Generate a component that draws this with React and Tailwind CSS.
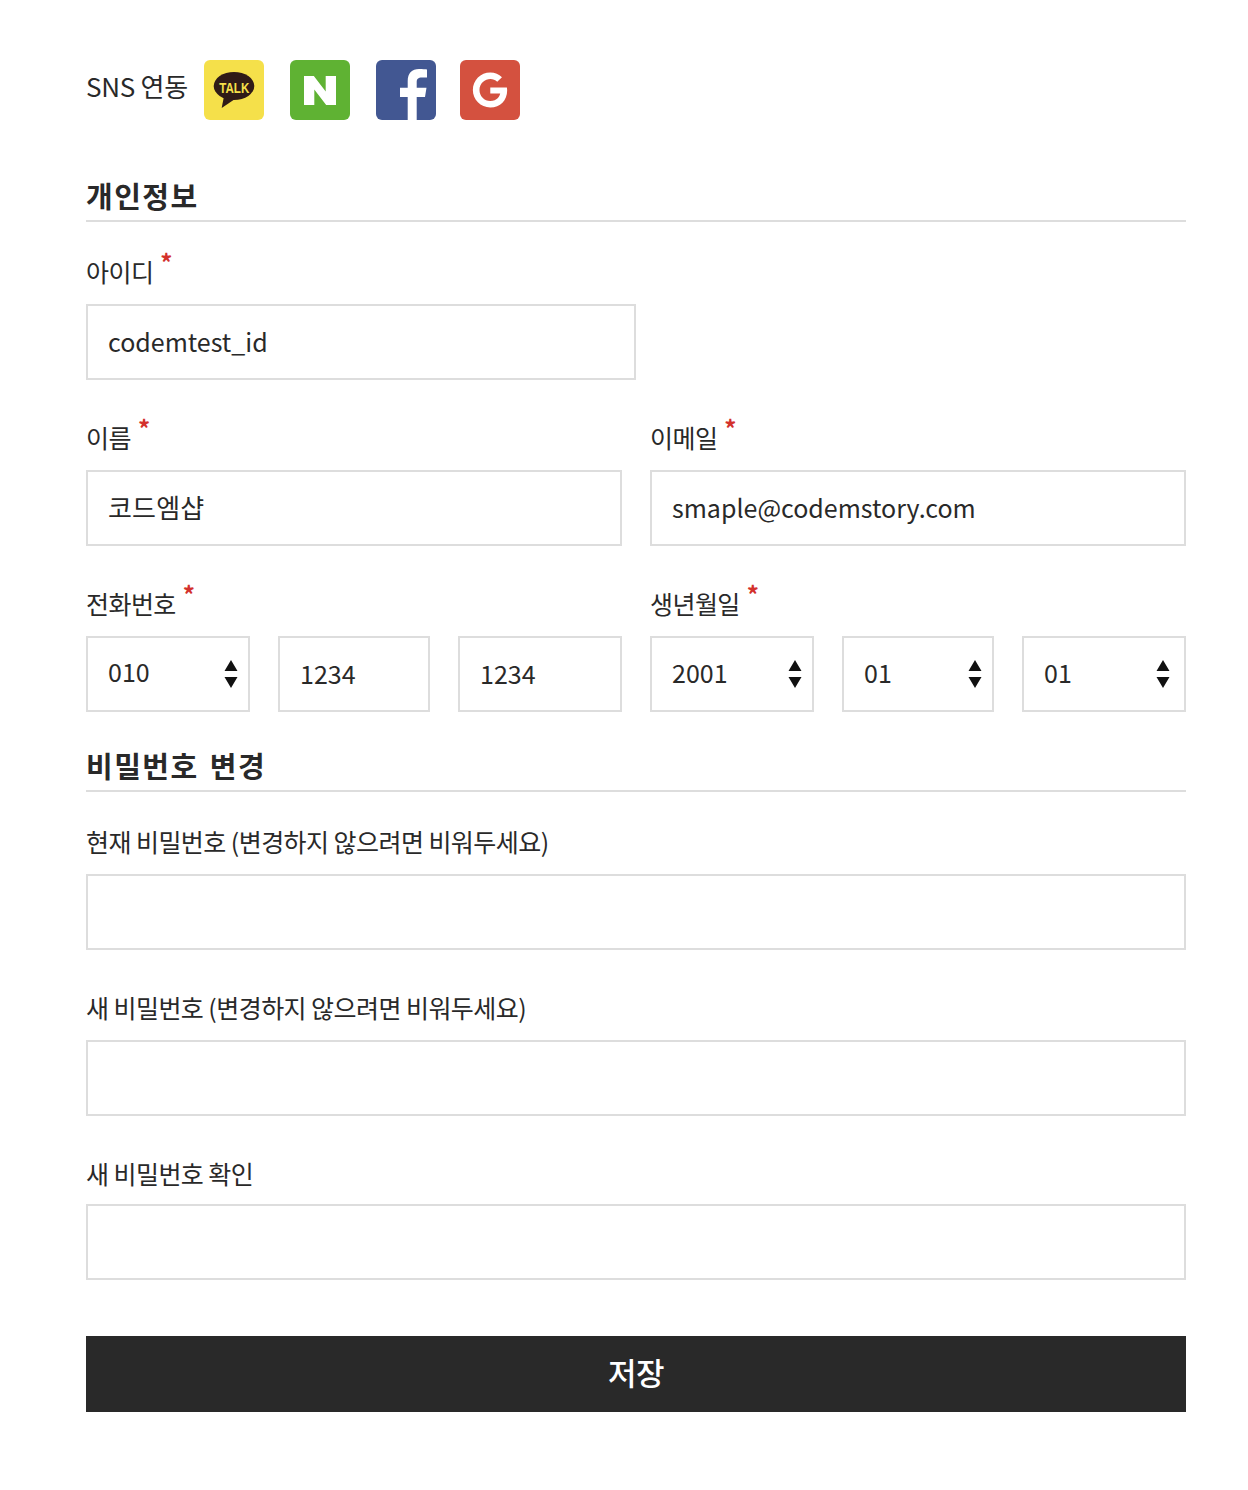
import { SiNaver } from "react-icons/si";
import { FaGoogle } from "react-icons/fa";

const inputClass =
  "h-[76px] w-full border-2 border-[#dddddd] bg-white px-5 text-[25px] text-[#292929] outline-none rounded-none";

function Label({ children, required, short }) {
  return (
    <div
      className={`flex items-start pt-[14px] text-[25px] leading-[38px] tracking-[-0.55px] text-[#292929] ${
        short ? "h-[64px]" : "h-[66px]"
      }`}
    >
      <span>{children}</span>
      {required ? (
        <span className="relative ml-[7px] -top-[3px] text-[24px] leading-[26px] font-bold text-[#d3312c]">*</span>
      ) : null}
    </div>
  );
}

function TextInput({ value = "", type = "text", className = "pb-[2px]" }) {
  return <input type={type} value={value} readOnly className={`${inputClass} ${className}`} />;
}

function Select({ value, className = "pb-[2px]", arrowClass = "right-[12px]" }) {
  return (
    <div className="relative">
      <select value={value} onChange={() => {}} className={`${inputClass} appearance-none ${className}`}>
        <option value={value}>{value}</option>
      </select>
      <svg className={`pointer-events-none absolute top-[24px] ${arrowClass}`} width="14" height="28" viewBox="0 0 14 28">
        <path d="M7 0 L13.5 11 H0.5 Z M0.5 17 H13.5 L7 28 Z" fill="#111111" />
      </svg>
    </div>
  );
}

function Heading({ children }) {
  return (
    <h2 className="flex h-[56px] items-end border-b-2 border-[#dddddd] pb-[4px] text-[29px] leading-[42px] font-bold tracking-[1.5px] [word-spacing:3px] text-[#292929]">
      {children}
    </h2>
  );
}

function KakaoIcon() {
  return (
    <div className="flex size-[60px] items-center justify-center rounded-[6px] bg-[#f5e04a]">
      <svg width="60" height="60" viewBox="0 0 60 60">
        <ellipse cx="30" cy="26" rx="20.3" ry="14" fill="#2f1b17" />
        <path d="M20 36 L17.7 48 L31 39 Z" fill="#2f1b17" />
        <text
          x="15.3"
          y="33"
          fontSize="14.5"
          fontWeight="700"
          textLength="30"
          lengthAdjust="spacingAndGlyphs"
          fill="#f5e04a"
          fontFamily="'Liberation Sans', sans-serif"
        >
          TALK
        </text>
      </svg>
    </div>
  );
}

function FacebookIcon() {
  return (
    <div className="size-[60px] overflow-hidden rounded-[6px] bg-[#425792]">
      <svg width="60" height="60" viewBox="0 0 60 60">
        <path
          d="M31.7 60 V37 H24 V27.7 H31.7 V21 C31.7 13 36 9 43 9 C46 9 50 9.3 51 9.5 V17.5 H46 C42 17.5 40.7 19 40.7 22 V27.7 H50.5 L49 37 H40.7 V60 Z"
          fill="#ffffff"
        />
      </svg>
    </div>
  );
}

export default function App() {
  return (
    <div className="min-h-[1490px] bg-white pt-[60px] pl-[86px] pr-[62px] font-['Noto_Sans_CJK_KR','Noto_Sans',sans-serif]">
      <div className="flex h-[60px] items-start">
        <span className="w-[118px] pt-[6px] text-[26px] leading-[40px] tracking-[-0.25px] text-[#292929]">SNS 연동</span>
        <KakaoIcon />
        <div className="ml-[26px] flex size-[60px] items-center justify-center rounded-[6px] bg-[#5fb233] text-white">
          <SiNaver className="h-[29px] w-[32px]" preserveAspectRatio="none" />
        </div>
        <div className="ml-[26px]">
          <FacebookIcon />
        </div>
        <div className="ml-[24px] flex size-[60px] items-center justify-center rounded-[6px] bg-[#d4513f] text-white">
          <FaGoogle size={36} />
        </div>
      </div>

      <div className="mt-[46px]">
        <Heading>개인정보</Heading>
      </div>

      <div className="pt-4">
        <div className="mb-6 w-[550px]">
          <Label required>아이디</Label>
          <TextInput value="codemtest_id" />
        </div>

        <div className="mb-6 grid grid-cols-2 gap-x-7">
          <div>
            <Label required>이름</Label>
            <TextInput value="코드엠샵" className="pb-1 text-[26px] tracking-[0.2px]" />
          </div>
          <div>
            <Label required>이메일</Label>
            <TextInput value="smaple@codemstory.com" />
          </div>
        </div>

        <div className="mb-6 grid grid-cols-2 gap-x-7">
          <div>
            <Label required>전화번호</Label>
            <div className="grid grid-cols-[164px_1fr_164px] gap-x-7">
              <Select value="010" className="pb-[5px]" />
              <TextInput value="1234" />
              <TextInput value="1234" />
            </div>
          </div>
          <div>
            <Label required>생년월일</Label>
            <div className="grid grid-cols-[164px_1fr_164px] gap-x-7">
              <Select value="2001" />
              <Select value="01" />
              <Select value="01" arrowClass="right-[16px]" />
            </div>
          </div>
        </div>
      </div>

      <Heading>비밀번호 변경</Heading>

      <div className="pt-4">
        <div className="mb-6">
          <Label>현재 비밀번호 (변경하지 않으려면 비워두세요)</Label>
          <TextInput type="password" />
        </div>
        <div className="mb-6">
          <Label>새 비밀번호 (변경하지 않으려면 비워두세요)</Label>
          <TextInput type="password" />
        </div>
        <div>
          <Label short>새 비밀번호 확인</Label>
          <TextInput type="password" />
        </div>
      </div>

      <button
        type="button"
        className="mt-14 h-[76px] w-full bg-[#292929] pb-1 text-[31px] font-medium tracking-[-0.6px] text-white"
      >
        저장
      </button>
    </div>
  );
}
